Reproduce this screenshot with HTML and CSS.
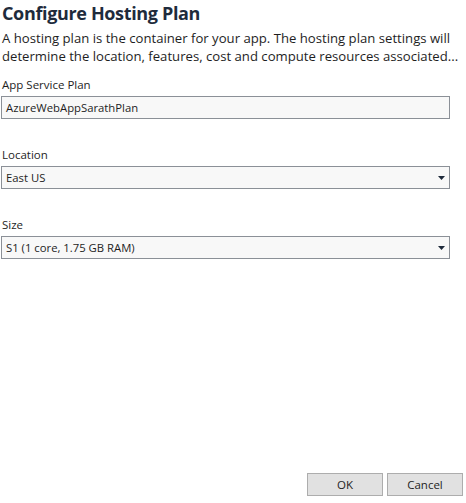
FILE: index.html
```html
<!DOCTYPE html>
<html lang="en">
<head>
<meta charset="utf-8">
<title>Configure Hosting Plan</title>
<link rel="stylesheet" href="styles.css">
</head>
<body>
<div class="dialog">
  <main class="content">
    <h1 class="title">Configure Hosting Plan</h1>
    <p class="desc">A hosting plan is the container for your app. The hosting plan settings will<br>determine the location, features, cost and compute resources associated...</p>

    <div class="field field-first">
      <label class="label">App Service Plan</label>
      <div class="box"><span class="value">AzureWebAppSarathPlan</span></div>
    </div>

    <div class="field">
      <label class="label">Location</label>
      <div class="box select"><span class="value">East US</span>
        <svg class="arrow" width="7" height="4" viewBox="0 0 7 4"><path d="M0 0H7L3.5 4Z" fill="#1e2a3a"/></svg>
      </div>
    </div>

    <div class="field field-last">
      <label class="label">Size</label>
      <div class="box select"><span class="value">S1 (1 core, 1.75 GB RAM)</span>
        <svg class="arrow" width="7" height="4" viewBox="0 0 7 4"><path d="M0 0H7L3.5 4Z" fill="#1e2a3a"/></svg>
      </div>
    </div>
  </main>

  <footer class="footer">
    <button class="btn">OK</button>
    <button class="btn">Cancel</button>
  </footer>
</div>
</body>
</html>
```
FILE: styles.css
```css
* { box-sizing: border-box; }

html, body {
  margin: 0;
  padding: 0;
  background: #ffffff;
}

body {
  font-family: "Open Sans", "Noto Sans", "Liberation Sans", sans-serif;
  color: #1e1e1e;
}

.dialog {
  height: 503px;
  display: flex;
  flex-direction: column;
  padding: 0 3px 7px 1px;
}

.content {
  display: flex;
  flex-direction: column;
}

.title {
  margin: 0;
  padding-left: 1px;
  font-size: 18px;
  font-weight: 700;
  line-height: 26px;
  color: #1e2b3c;
  letter-spacing: -0.35px;
}

.desc {
  margin: 3px 0 0 0;
  padding-left: 1px;
  font-size: 13.15px;
  line-height: 18px;
  color: #1e1e1e;
  white-space: nowrap;
}

.field {
  display: flex;
  flex-direction: column;
  gap: 3px;
  margin-top: 28px;
}

.field-first {
  margin-top: 12px;
}

.label {
  font-size: 11.5px;
  line-height: 16px;
  padding-left: 1px;
  color: #1e1e1e;
}

.box {
  width: 449px;
  height: 23px;
  border: 1px solid #8b9097;
  background: #f8f8f8;
  display: flex;
  align-items: center;
  padding: 0 4px 0 4px;
  font-size: 11.3px;
  color: #1e1e1e;
}

.value {
  flex: 1;
  line-height: 16px;
}

.arrow {
  display: block;
}

.footer {
  margin-top: auto;
  display: flex;
  justify-content: flex-end;
  gap: 4px;
}

.btn {
  width: 76px;
  height: 23px;
  border: 1px solid #adadad;
  background: #e1e1e1;
  font-family: "Open Sans", "Noto Sans", "Liberation Sans", sans-serif;
  font-size: 11.5px;
  color: #1e1e1e;
  padding: 0;
}
```
